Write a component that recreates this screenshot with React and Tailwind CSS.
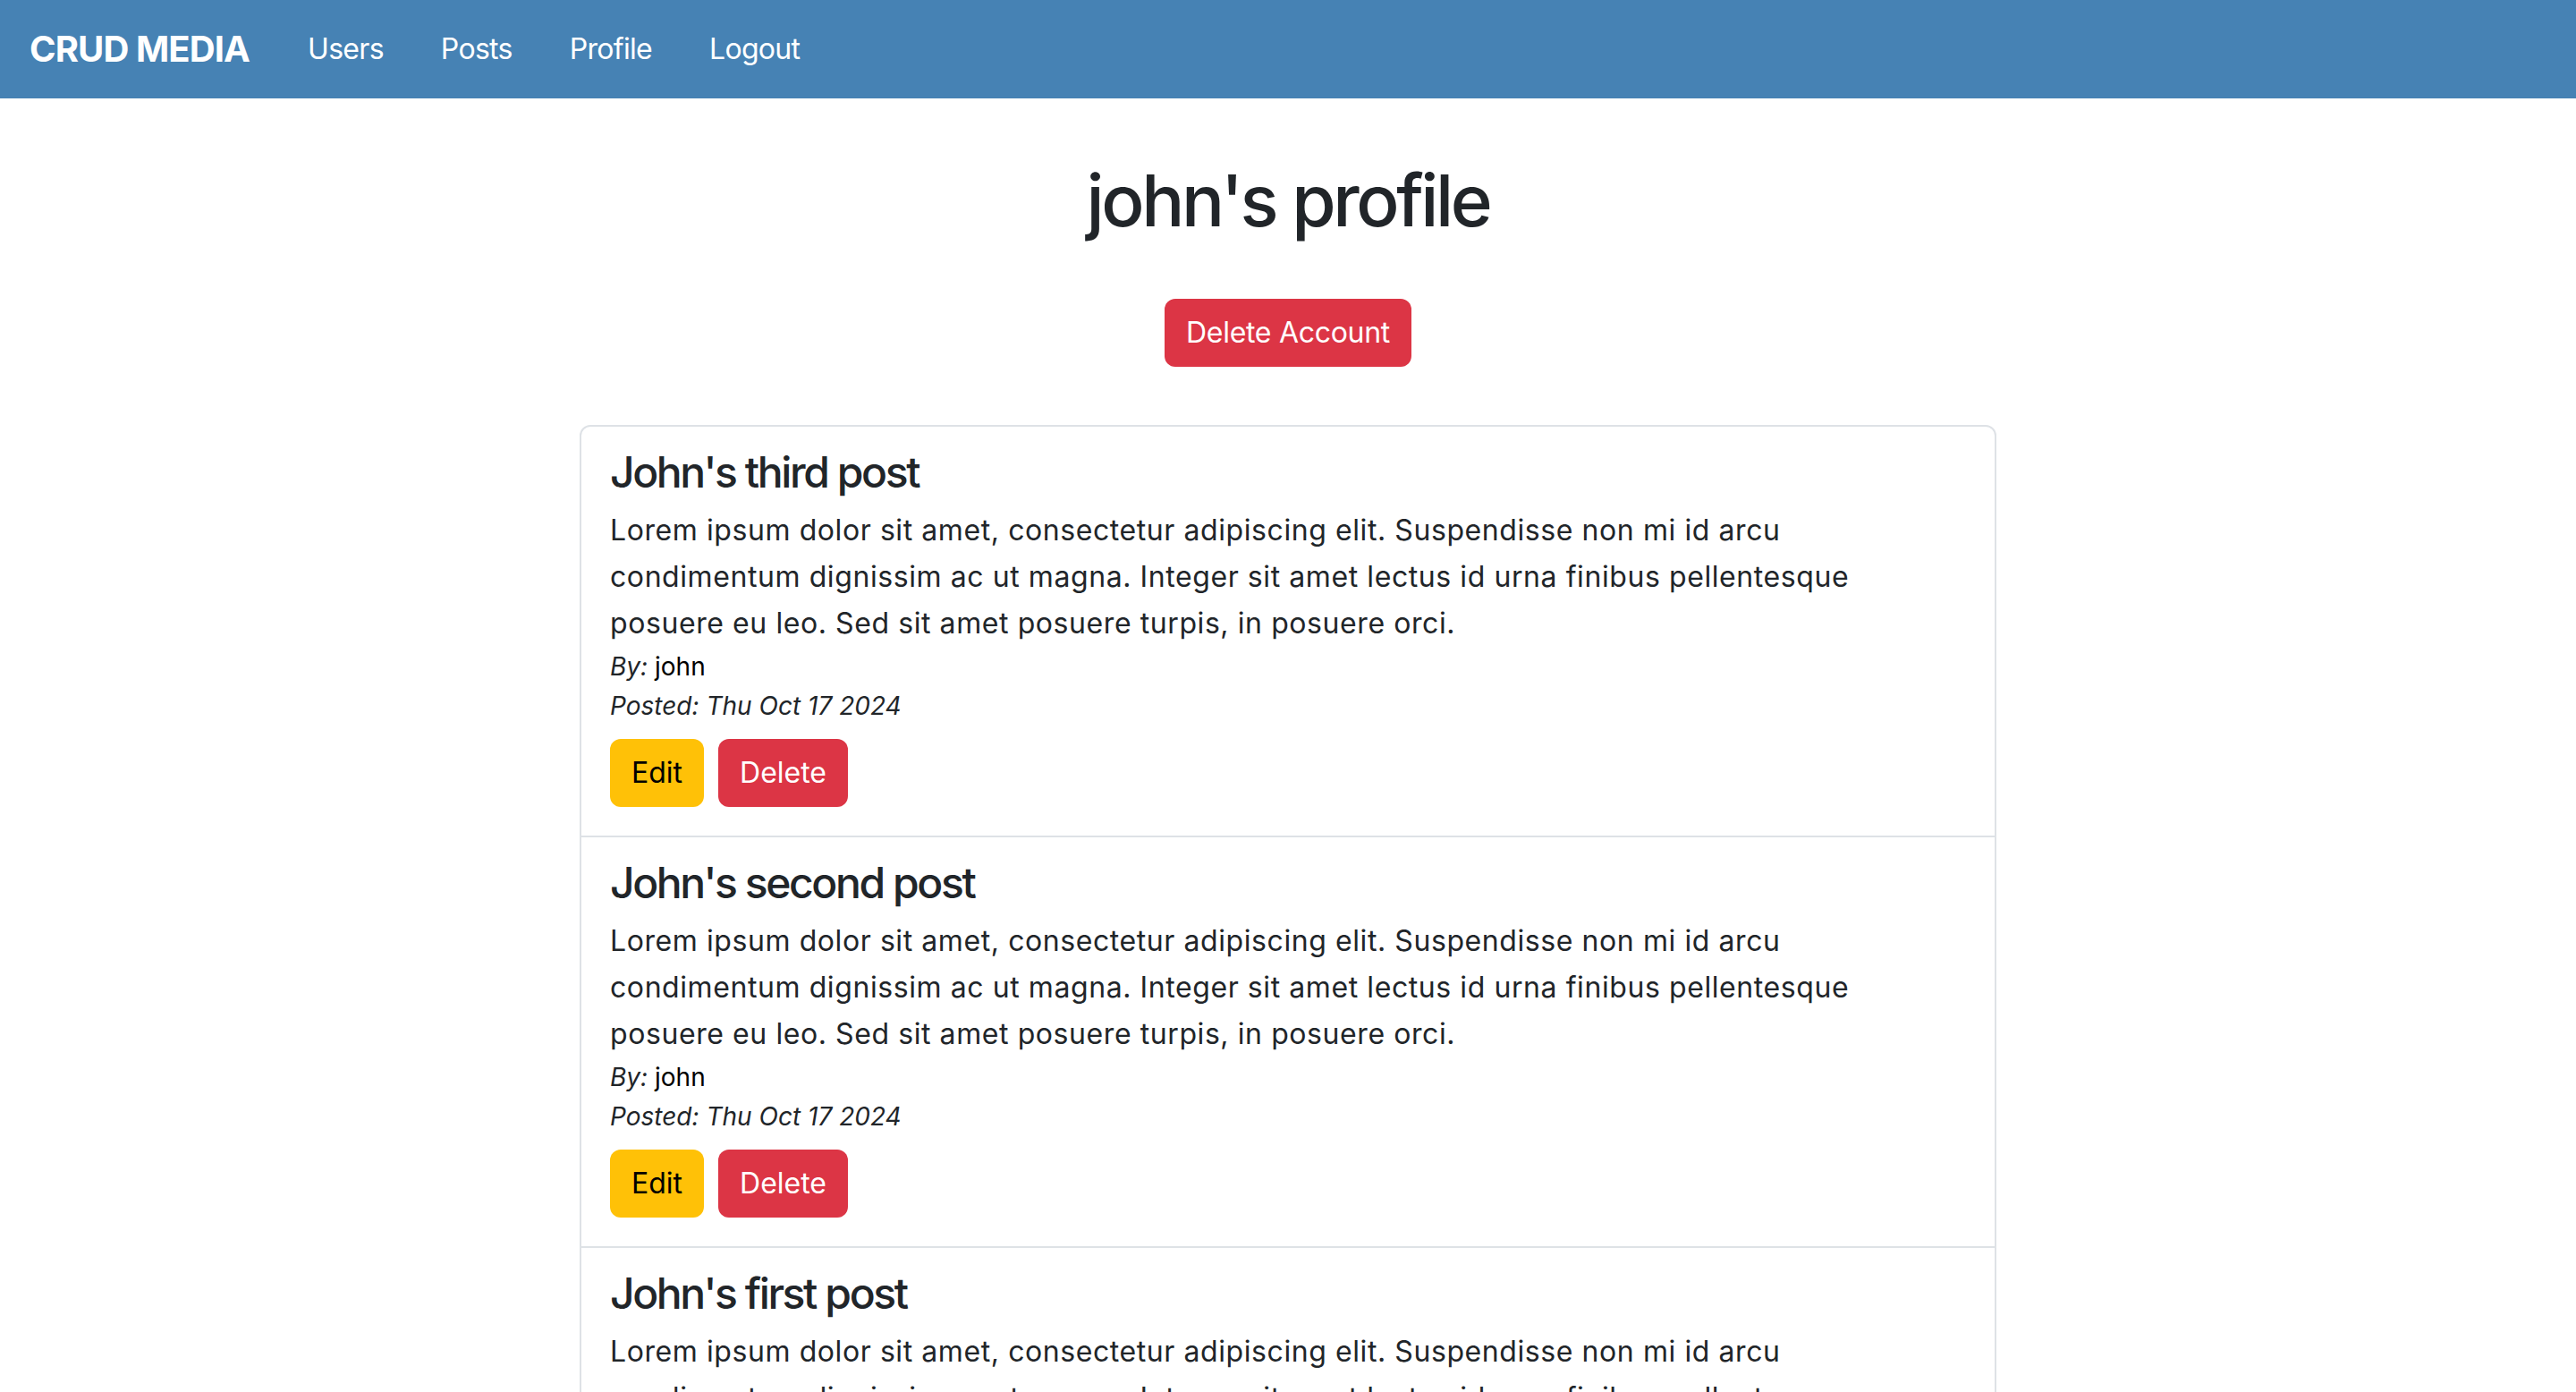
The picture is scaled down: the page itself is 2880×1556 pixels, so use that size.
import React from 'react';

const posts = [
  { title: "John's third post" },
  { title: "John's second post" },
  { title: "John's first post" },
];

// body copy, wrapped where the reference wraps it
const lines = [
  'Lorem ipsum dolor sit amet, consectetur adipiscing elit. Suspendisse non mi id arcu',
  'condimentum dignissim ac ut magna. Integer sit amet lectus id urna finibus pellentesque',
  'posuere eu leo. Sed sit amet posuere turpis, in posuere orci.',
];

function PostItem({ title, first }) {
  return (
    <li className={`px-[32px] pt-[16px] pb-[32px] ${first ? '' : 'border-t-2 border-[#dee2e6]'}`}>
      <h4 className="mt-[6px] mb-[10px] text-[48px] leading-[58px] font-medium tracking-[-2.4px]">{title}</h4>
      <p className="text-[32px] leading-[52px] tracking-[0.58px]">
        {lines[0]}
        <br />
        {lines[1]}
        <br />
        {lines[2]}
      </p>
      <p className="text-[28px] leading-[44px]">
        <em>By:</em> <span className="text-black">john</span>
      </p>
      <p className="text-[28px] leading-[44px] italic">Posted: Thu Oct 17 2024</p>
      <div className="flex gap-[16px] mt-[15px]">
        <button className="h-[76px] px-[24px] rounded-[12px] bg-[#ffc107] text-black text-[32px]">Edit</button>
        <button className="h-[76px] px-[24px] rounded-[12px] bg-[#dc3545] text-white text-[32px]">Delete</button>
      </div>
    </li>
  );
}

export default function App() {
  return (
    <div className="min-h-screen bg-white text-[#212529] font-['Inter','Liberation_Sans',sans-serif]">
      {/* Top navbar */}
      <nav className="h-[110px] bg-[#4682b4] flex items-center pl-[33px]">
        <span className="text-[40px] font-bold text-white mr-[65px] tracking-[-0.9px]">CRUD MEDIA</span>
        <div className="flex gap-[64px] text-[32px] text-white tracking-[-0.7px]">
          <span>Users</span>
          <span>Posts</span>
          <span>Profile</span>
          <span>Logout</span>
        </div>
      </nav>

      <main className="flex flex-col items-center">
        <h1 className="mt-[66px] text-[80px] leading-[96px] font-medium tracking-[-3.4px]">john's profile</h1>
        <button className="mt-[62px] h-[76px] px-[24px] rounded-[12px] bg-[#dc3545] text-white text-[32px] tracking-[-0.3px]">
          Delete Account
        </button>

        {/* Post list */}
        <ul className="mt-[65px] w-[1584px] border-2 border-[#dee2e6] rounded-[12px]">
          {posts.map((p, i) => (
            <PostItem key={p.title} title={p.title} first={i === 0} />
          ))}
        </ul>
      </main>
    </div>
  );
}
